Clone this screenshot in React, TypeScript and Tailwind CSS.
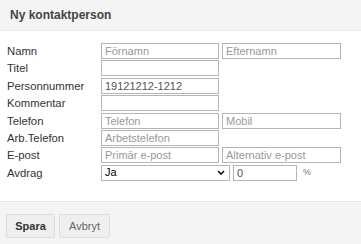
const inputCls =
  "h-[16px] border border-[#b5b5b5] bg-white px-[3px] text-[11px] leading-none text-[#555] placeholder:text-[#999] outline-none";

type Row = {
  label: string;
  fields: { placeholder?: string; value?: string }[];
};

const rows: Row[] = [
  { label: "Namn", fields: [{ placeholder: "Förnamn" }, { placeholder: "Efternamn" }] },
  { label: "Titel", fields: [{}] },
  { label: "Personnummer", fields: [{ value: "19121212-1212" }] },
  { label: "Kommentar", fields: [{}] },
  { label: "Telefon", fields: [{ placeholder: "Telefon" }, { placeholder: "Mobil" }] },
  { label: "Arb.Telefon", fields: [{ placeholder: "Arbetstelefon" }] },
  { label: "E-post", fields: [{ placeholder: "Primär e-post" }, { placeholder: "Alternativ e-post" }] },
];

const labelCls = "w-[101px] pl-[7px] text-[11.3px] leading-[16px]";

const App = () => {
  return (
    <div className="flex h-[244px] w-[361px] flex-col bg-white font-['Liberation_Sans',Arial,sans-serif] text-[#333]">
      <header className="flex h-[31px] items-center border-b border-[#e8e8e8] bg-[#f4f4f4] px-[10px]">
        <h2 className="text-[12px] font-bold text-[#444]">Ny kontaktperson</h2>
      </header>

      <section className="flex flex-col gap-[1.4px] pt-[12px]">
        {rows.map((row, i) => (
          <div key={i} className="flex h-[16px] items-center">
            <label className={labelCls}>{row.label}</label>
            <input
              className={`${inputCls} w-[118px]`}
              placeholder={row.fields[0].placeholder}
              defaultValue={row.fields[0].value}
            />
            {row.fields[1] && (
              <input
                className={`${inputCls} ml-[3px] w-[119px]`}
                placeholder={row.fields[1].placeholder}
              />
            )}
          </div>
        ))}
        <div className="flex h-[16px] items-center">
          <label className={labelCls}>Avdrag</label>
          <div className="relative flex h-[16px] w-[129px] items-center border border-[#b5b5b5] bg-white px-[3px] text-[11px] text-black">
            <span>Ja</span>
            <svg
              className="absolute right-[4px] top-[4px]"
              width="8"
              height="6"
              viewBox="0 0 8 6"
              fill="none"
            >
              <path d="M1 1l3 3 3-3" stroke="#111" strokeWidth="1.6" />
            </svg>
          </div>
          <input className={`${inputCls} ml-[3px] w-[64px]`} defaultValue="0" />
          <span className="ml-[6px] text-[9px] text-[#777]">%</span>
        </div>
      </section>

      <footer className="mt-auto flex h-[43px] items-start gap-[4px] border-t border-[#e6e6e6] bg-[#f4f4f4] px-[6px] pt-[12px]">
        <button
          type="button"
          className="h-[24px] w-[49px] rounded-[2px] border border-[#dcdcdc] bg-[#efefef] text-[11px] font-bold text-[#333]"
        >
          Spara
        </button>
        <button
          type="button"
          className="h-[24px] w-[51px] rounded-[2px] border border-[#dcdcdc] bg-[#efefef] text-[11px] text-[#666]"
        >
          Avbryt
        </button>
      </footer>
    </div>
  );
};

export default App;
